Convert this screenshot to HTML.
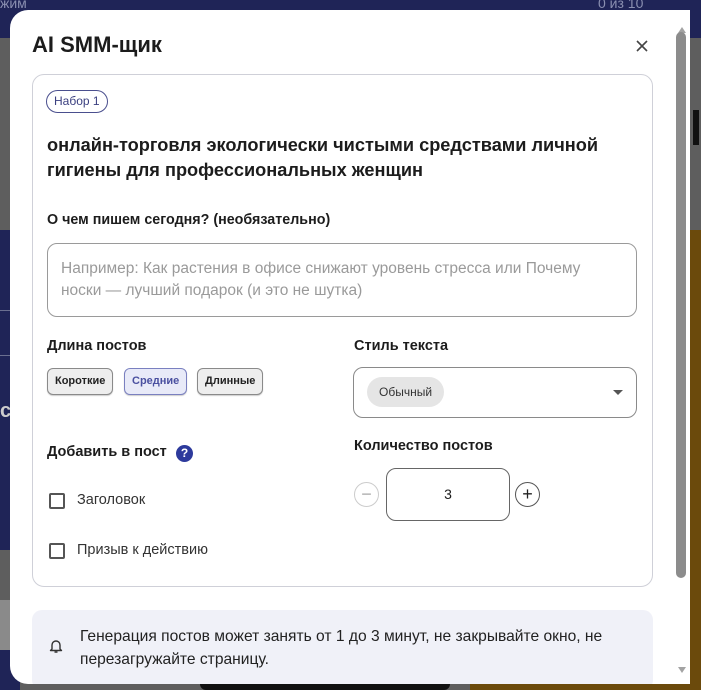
<!DOCTYPE html>
<html><head><meta charset="utf-8"><style>
*{margin:0;padding:0;box-sizing:border-box}
body{width:701px;height:690px;overflow:hidden;position:relative;background:#5e5e5e;font-family:"Liberation Sans","Noto Sans CJK SC",sans-serif;color:#1c1c1c}
.a{position:absolute;white-space:nowrap}
.modal{position:absolute;left:10px;top:10px;width:680px;height:674px;background:#fff;border-radius:18px 0 0 18px;overflow:hidden}
.chip{position:absolute;height:27px;border:1px solid #8a8a8a;border-radius:6px;background:#eeeeee;font-size:11px;font-weight:bold;line-height:25px;padding:0 7px;box-shadow:0 1px 1px rgba(0,0,0,.2)}
.cb{position:absolute;width:16px;height:16px;border:2px solid #555;border-radius:2px}
</style></head><body>
<div class="a" style="left:0;top:0;width:701px;height:38px;background:#1f2457"></div>
<div class="a" style="left:0;top:0;color:#8a8fb0;font-size:14px;top:-5px">жим</div>
<div class="a" style="left:598px;top:-5px;color:#8a8fb0;font-size:14px">0 из 10</div>
<div class="a" style="left:0;top:230px;width:20px;height:320px;background:#1f2457"></div>
<div class="a" style="left:0;top:310px;width:20px;height:1px;background:#6a6f90"></div>
<div class="a" style="left:0;top:355px;width:20px;height:1px;background:#6a6f90"></div>
<div class="a" style="left:0;top:400px;color:#ccc;font-size:20px;font-weight:bold">с</div>
<div class="a" style="left:0;top:600px;width:20px;height:50px;background:#8a8a8a"></div>
<div class="a" style="left:0;top:650px;width:20px;height:40px;background:#1f2457"></div>
<div class="a" style="left:690px;top:230px;width:11px;height:460px;background:#6b4a0c"></div>
<div class="a" style="left:693px;top:110px;width:6px;height:35px;background:#111"></div>
<div class="a" style="left:200px;top:684px;width:250px;height:6px;background:#111;border-radius:0 0 8px 8px"></div>
<div class="a" style="left:470px;top:684px;width:231px;height:6px;background:#6b4a0c"></div>

<div class="modal">
 <div class="a" style="left:22px;top:22px;font-size:22px;font-weight:bold;color:#1c1c1c">AI SMM-щик</div>
 <svg class="a" style="left:626px;top:30px" width="12" height="12" viewBox="0 0 12 12"><path d="M1 1L11 11M11 1L1 11" stroke="#444" stroke-width="1.6"/></svg>
 <svg class="a" style="left:667px;top:16px" width="10" height="8"><path d="M5 1L9 7H1z" fill="#a3a3a3"/></svg>
 <svg class="a" style="left:667px;top:656px" width="10" height="8"><path d="M1 1H9L5 7z" fill="#a3a3a3"/></svg>
 <div class="a" style="left:666px;top:22px;width:10px;height:546px;background:#8c8c8c;border-radius:5px"></div>

 <div class="a" style="left:22px;top:64px;width:621px;height:513px;border:1px solid #cfd0d8;border-radius:12px"></div>
 <div class="a" style="left:36px;top:80px;height:23px;padding:0 7px;border:1.5px solid #4a4f8e;border-radius:12px;font-size:12px;line-height:20px;color:#3b4080">Набор 1</div>
 <div class="a" style="left:37px;top:123px;font-size:18.2px;font-weight:bold;line-height:25px;color:#1c1c1c">онлайн-торговля экологически чистыми средствами личной<br>гигиены для профессиональных женщин</div>
 <div class="a" style="left:37px;top:202px;font-size:14.3px;font-weight:bold;color:#1c1c1c">О чем пишем сегодня? (необязательно)</div>
 <div class="a" style="left:37px;top:233px;width:590px;height:74px;border:1px solid #9a9a9a;border-radius:10px"></div>
 <div class="a" style="left:51px;top:248px;font-size:15.5px;line-height:22px;color:#9a9a9a">Например: Как растения в офисе снижают уровень стресса или Почему<br>носки — лучший подарок (и это не шутка)</div>

 <div class="a" style="left:37px;top:328px;font-size:14.5px;font-weight:bold">Длина постов</div>
 <div class="chip" style="left:37px;top:358px;color:#222">Короткие</div>
 <div class="chip" style="left:114px;top:358px;color:#4a50a0;background:#e8eaf8;border-color:#7a80c0">Средние</div>
 <div class="chip" style="left:187px;top:358px;color:#222">Длинные</div>

 <div class="a" style="left:344px;top:328px;font-size:14.5px;font-weight:bold">Стиль текста</div>
 <div class="a" style="left:343px;top:357px;width:284px;height:51px;border:1px solid #8a8a8a;border-radius:10px"></div>
 <div class="a" style="left:357px;top:367px;height:30px;padding:0 12px;background:#e5e5e5;border-radius:15px;font-size:12px;line-height:30px;color:#333">Обычный</div>
 <svg class="a" style="left:603px;top:380px" width="10" height="6"><path d="M0 0H10L5 5z" fill="#555"/></svg>

 <div class="a" style="left:37px;top:434px;font-size:14.5px;font-weight:bold">Добавить в пост</div>
 <div class="a" style="left:166px;top:435px;width:17px;height:17px;border-radius:50%;background:#2d3a9c;color:#fff;font-size:12px;font-weight:bold;text-align:center;line-height:17px">?</div>
 <div class="cb" style="left:39px;top:483px"></div>
 <div class="a" style="left:67px;top:482px;font-size:14.5px;color:#333">Заголовок</div>
 <div class="cb" style="left:39px;top:533px"></div>
 <div class="a" style="left:67px;top:532px;font-size:14.5px;color:#333">Призыв к действию</div>

 <div class="a" style="left:344px;top:428px;font-size:14.5px;font-weight:bold">Количество постов</div>
 <div class="a" style="left:344px;top:472px;width:25px;height:25px;border:1px solid #ccc;border-radius:50%;color:#aaa;text-align:center;line-height:22px;font-size:18px">−</div>
 <div class="a" style="left:376px;top:458px;width:124px;height:53px;border:1px solid #666;border-radius:10px;text-align:center;line-height:51px;font-size:14px">3</div>
 <div class="a" style="left:505px;top:472px;width:25px;height:25px;border:1px solid #555;border-radius:50%;color:#222;text-align:center;line-height:22px;font-size:18px">+</div>

 <div class="a" style="left:22px;top:600px;width:621px;height:80px;background:#f0f1f8;border-radius:10px"></div>
 <svg class="a" style="left:39px;top:628px" width="14" height="16" viewBox="0 0 14 16"><path d="M3 11V7a4 4 0 0 1 8 0v4l1.5 1.5h-11z" fill="none" stroke="#333" stroke-width="1.4" stroke-linejoin="round"/><path d="M5.5 14h3" stroke="#333" stroke-width="1.4"/></svg>
 <div class="a" style="left:70px;top:615px;font-size:15.6px;line-height:23px;color:#222">Генерация постов может занять от 1 до 3 минут, не закрывайте окно, не<br>перезагружайте страницу.</div>
</div>
</body></html>
